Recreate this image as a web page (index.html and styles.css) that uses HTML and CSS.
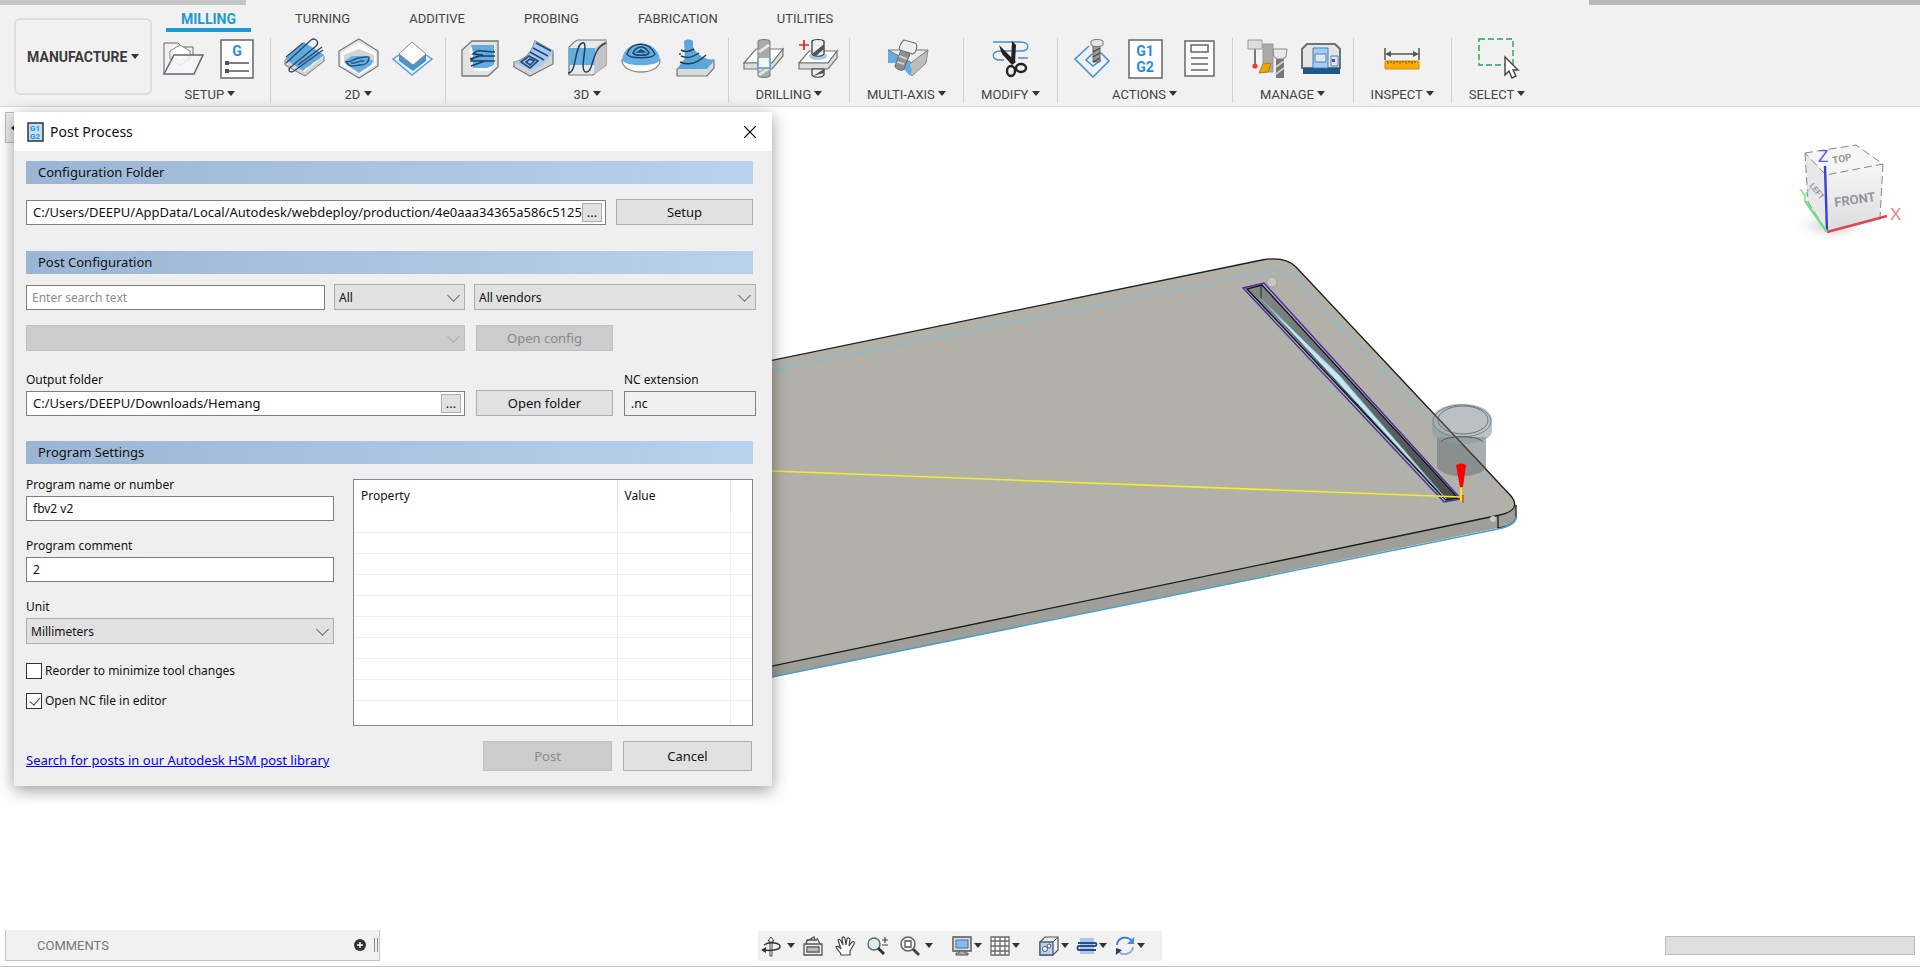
FILE: index.html
```html
<!DOCTYPE html>
<html lang="en">
<head>
    <meta charset="UTF-8">
    <meta name="viewport" content="width=device-width, initial-scale=1.0">
    <title>Post Process</title>
    <link rel="stylesheet" href="styles.css">
</head>
<body>
    <header class="toolbar">
        <div class="strip strip-left"></div>
        <div class="strip strip-right"></div>
        <button type="button" class="workspace-switch">MANUFACTURE <span class="caret"></span></button>

        <div class="ribbon">
            <nav class="tabs">
                <a href="#milling" class="tab active">MILLING</a>
                <a href="#turning" class="tab">TURNING</a>
                <a href="#additive" class="tab">ADDITIVE</a>
                <a href="#probing" class="tab">PROBING</a>
                <a href="#fabrication" class="tab">FABRICATION</a>
                <a href="#utilities" class="tab">UTILITIES</a>
            </nav>

            <div class="groups">
                <section class="group">
                    <div class="icons">
                        <svg class="icon" viewBox="0 0 40 40">
                            <path d="M1 36V5h14l4 4h11v9" fill="none" stroke="#666"/>
                            <path d="M7 13l10-6 10 6v8l-10 6-10-6z" fill="#fff" stroke="#888"/>
                            <path d="M8 17l9 5 9-5v4l-9 6-9-6z" fill="#cfe4f5"/>
                            <path d="M1 36l10-19h29l-9 19z" fill="#f5f7f9" fill-opacity=".8" stroke="#666" stroke-width="1.5"/>
                        </svg>
                        <svg class="icon" viewBox="0 0 40 40">
                            <rect x="4" y="2" width="32" height="38" fill="#fff" stroke="#666" stroke-width="1.5"/>
                            <text x="20" y="18" class="glyph" font-size="14" text-anchor="middle">G</text>
                            <path d="M8 23h4v4H8zM8 31h4v4H8z" fill="#555"/>
                            <path d="M12 25h20M12 33h20" stroke="#555" stroke-width="1.3"/>
                        </svg>
                    </div>
                    <button type="button" class="menu">SETUP <span class="caret"></span></button>
                </section>

                <section class="group">
                    <div class="icons">
                        <svg class="icon" viewBox="0 0 40 40">
                            <path d="M1 22L23 6l17 12v5L21 38 1 27z" fill="#d5d5d5" stroke="#777"/>
                            <path d="M1 21L22 4l18 14-20 16z" fill="#fff"/>
                            <path d="M1 21L20 4l20 13-6 5-4 2-4 4-4 2-3 3z" fill="#5da9e0"/>
                            <path d="M2 25L27 2c4-3 9 2 5 6L8 28c-5 3-3 8 2 5L39 12M2 19l17-14M14 27l24-18" fill="none" stroke="#2b4a68" stroke-width="1.4"/>
                        </svg>
                        <svg class="icon" viewBox="0 0 40 40">
                            <path d="M21 1l19 12v15L21 40 1 28V13z" fill="#e4e4e4" stroke="#777" stroke-width="1.2"/>
                            <path d="M3 15l18-11 17 11v12L21 37 3 27z" fill="#fafafa"/>
                            <path d="M6 17l15-6 15 6v8L21 34 6 25z" fill="#d2d5d8"/>
                            <path d="M7 23l7-5h14l7 5-2 4-12 8-12-8z" fill="#65aee4"/>
                            <path d="M8 24c8 0 8-4 13-4s7-2 10-1c0 5-3 8-9 8s-9 4-14-3zM13 25c5 1 8-3 13-2" fill="none" stroke="#1f4c74" stroke-width="1.3"/>
                        </svg>
                        <svg class="icon" viewBox="0 0 40 40">
                            <path d="M7 17L1 21l19 16 20-16-6-4" fill="none" stroke="#4f9fdc" stroke-width="1.4"/>
                            <path d="M7 16l14 11 13-11v7L21 33 7 23z" fill="#4b93cb"/>
                            <path d="M20 4l14 12-13 11L7 16z" fill="#fff" stroke="#888"/>
                        </svg>
                    </div>
                    <button type="button" class="menu">2D <span class="caret"></span></button>
                </section>

                <section class="group">
                    <div class="icons">
                        <svg class="icon" viewBox="0 0 40 40">
                            <path d="M3 38V12L13 3h26v26L29 38z" fill="#e3e3e3" stroke="#777" stroke-width="1.3"/>
                            <path d="M10 12l4-5h22v20l-6 6H16z" fill="#f8f8f8"/>
                            <path d="M12 7h23v20l-7 3H14V14z" fill="#5fade4"/>
                            <path d="M36 14c-9 0-13-2-18-1l-4 3 10 1c-7 1-11 4-12 6h24M11 21l13-4M36 18H20M12 28l14-5" fill="none" stroke="#1d3f60" stroke-width="1.5"/>
                        </svg>
                        <svg class="icon" viewBox="0 0 40 40">
                            <path d="M1 24c12-2 18-10 21-21l18 10v13L17 38 1 29z" fill="#d4d4d4" stroke="#777" stroke-width="1.2"/>
                            <path d="M1 24c12-2 18-10 21-21l18 10c-4 9-11 16-23 20z" fill="#a9c9ec"/>
                            <path d="M23 5l15 8M20 10l15 8M17 14l14 8M8 24l8-6 9 5-8 7zM13 24l4-3 4 2-4 4z" fill="none" stroke="#234a7c" stroke-width="1.7"/>
                        </svg>
                        <svg class="icon" viewBox="0 0 40 40">
                            <path d="M2 37h24l13-10V2H11C8 2 5 7 2 9z" fill="#e9e9e9" stroke="#777" stroke-width="1.2"/>
                            <path d="M2 10h26v17H2z" fill="#62ade2"/>
                            <path d="M28 10l11-8v25L27 37z" fill="#c4c4c4"/>
                            <path d="M1 35c9 0 6-26 14-30 8-3-4 28 4 29s5-24 20-29" fill="none" stroke="#27435c" stroke-width="1.5"/>
                        </svg>
                        <svg class="icon" viewBox="0 0 40 40">
                            <path d="M1 22c0 16 38 16 38 0z" fill="#fff" stroke="#91887c" stroke-width="1.3"/>
                            <path d="M1 22c2-22 36-22 38 0-3 7-35 7-38 0z" fill="#62ade3"/>
                            <path d="M6 16c4-13 22-13 28 0-2 5-26 5-28 0zM12 15c4-8 12-8 16 0-2 3-14 3-16 0zM17 14l3-2 3 2z" fill="none" stroke="#1e4568" stroke-width="1.5"/>
                        </svg>
                        <svg class="icon" viewBox="0 0 40 40">
                            <path d="M2 31L16 22h23v8l-7 8H2z" fill="#dadada" stroke="#777" stroke-width="1.2"/>
                            <path d="M9 3c2-2 7-2 9 0v6c4 8 12 12 21 14l-7 8H2l8-11z" fill="#5ba7dd"/>
                            <path d="M6 12c5 3 9 1 13-1M6 18c7 3 12 1 18-3M5 24c9 4 18 1 26-7M4 16h2" fill="none" stroke="#2b3d4c" stroke-width="1.5"/>
                        </svg>
                    </div>
                    <button type="button" class="menu">3D <span class="caret"></span></button>
                </section>

                <section class="group">
                    <div class="icons">
                        <svg class="icon" viewBox="0 0 40 40">
                            <path d="M2 25l12-14h27l-11 14z" fill="#fff" stroke="#777" stroke-width="1.2"/>
                            <path d="M2 25h28l11-14v7L30 31H2z" fill="#ddd" stroke="#777" stroke-width="1.2"/>
                            <path d="M16 3c2-2 10-2 12 0v35c-2 2-10 2-12 0z" fill="#aaa" stroke="#777"/>
                            <path d="M17 14l10-7M17 37l10-7M17 32l6-4" stroke="#e2e2e2" stroke-width="3"/>
                            <path d="M16 20h12v10H16z" fill="#f4f4f4"/>
                            <path d="M16 20v10h12V20" fill="none" stroke="#4a9edc" stroke-width="1.4"/>
                        </svg>
                        <svg class="icon" viewBox="0 0 40 40">
                            <path d="M3 25l10-12h28l-9 12z" fill="#fff" stroke="#777" stroke-width="1.2"/>
                            <path d="M3 25h29l9-12v7l-9 11H3z" fill="#ddd" stroke="#777" stroke-width="1.2"/>
                            <ellipse cx="22" cy="18" rx="9" ry="4" fill="#a7c9ea"/>
                            <path d="M16 3c2-2 10-2 12 0v13c-2 3-10 3-12 0zM16 31h12v6c-2 3-10 3-12 0z" fill="#eee" stroke="#333" stroke-width="1.2"/>
                            <path d="M16 16L28 6v5l-8 7zM17 38l11-7v4z" fill="#555"/>
                            <path d="M3 7h10M8 2v10" stroke="#e0242c" stroke-width="1.7"/>
                        </svg>
                    </div>
                    <button type="button" class="menu">DRILLING <span class="caret"></span></button>
                </section>

                <section class="group">
                    <div class="icons">
                        <svg class="icon" viewBox="0 0 40 40">
                            <path d="M1 12h16l8 12v14l-9-9V25H1z" fill="#62ade4"/>
                            <path d="M1 12h40L25 25z" fill="#ececec" stroke="#777"/>
                            <path d="M25 24l16-12-2 13-14 13-6-8z" fill="#bdbdbd" stroke="#888"/>
                            <path d="M19 18l6 14-2 6-7-8z" fill="#62ade4"/>
                            <path d="M14 12l9 4-6 15c-1 3-9 0-9-3z" fill="#8f8f8f" stroke="#666"/>
                            <path d="M12 18l8 3M10 24l7 2" stroke="#ccc" stroke-width="2"/>
                            <path d="M17 2l11 3c3 1 2 9-2 11L13 12c-2-1 1-8 4-10z" fill="#eee" stroke="#777" stroke-width="1.2"/>
                        </svg>
                    </div>
                    <button type="button" class="menu">MULTI-AXIS <span class="caret"></span></button>
                </section>

                <section class="group">
                    <div class="icons">
                        <svg class="icon" viewBox="0 0 40 40">
                            <path d="M3 4h28c9 0 9 9 0 9H10c-9 0-9 9 0 9h4M28 20h10" fill="none" stroke="#478cc8" stroke-width="1.4"/>
                            <path d="M22 3l4 4-1 18-4-1zM9 7l17 17-4 3L12 16z" fill="#222"/>
                            <ellipse cx="21" cy="33" rx="4" ry="5" fill="none" stroke="#222" stroke-width="2.4"/>
                            <ellipse cx="31" cy="30" rx="5" ry="4" fill="none" stroke="#222" stroke-width="2.4"/>
                        </svg>
                    </div>
                    <button type="button" class="menu">MODIFY <span class="caret"></span></button>
                </section>

                <section class="group">
                    <div class="icons">
                        <svg class="icon" viewBox="0 0 40 40">
                            <path d="M18 8L4 21l18 18 16-16-9-9M21 16l-6 6 7 6 8-6" fill="none" stroke="#2f93e0" stroke-width="1.5"/>
                            <path d="M22 8h7v16h-7z" fill="#999" stroke="#666"/>
                            <path d="M22 14l7-4M22 19l7-4M22 24l7-4" stroke="#444" stroke-width="1.3"/>
                            <path d="M20 3c2-2 10-2 12 0v4c-2 2-10 2-12 0z" fill="#e4e4e4" stroke="#777"/>
                        </svg>
                        <svg class="icon" viewBox="0 0 40 40">
                            <rect x="4" y="2" width="33" height="38" fill="#fff" stroke="#666" stroke-width="1.5"/>
                            <text x="20" y="18" class="glyph" font-size="14" text-anchor="middle">G1</text>
                            <text x="20" y="34" class="glyph" font-size="14" text-anchor="middle">G2</text>
                        </svg>
                        <svg class="icon" viewBox="0 0 40 40">
                            <path d="M6 3h29v35H6zM12 7h17v7H12zM12 20h17M12 26h17M12 32h17" fill="#fafafa" stroke="#666" stroke-width="1.5"/>
                        </svg>
                    </div>
                    <button type="button" class="menu">ACTIONS <span class="caret"></span></button>
                </section>

                <section class="group">
                    <div class="icons">
                        <svg class="icon" viewBox="0 0 40 40">
                            <path d="M9 11v16" stroke="#777" stroke-width="2"/>
                            <path d="M2 2h14v9H2z" fill="#ddd" stroke="#999"/>
                            <path d="M17 6h10v28H17z" fill="#aaa" stroke="#999"/>
                            <path d="M17 26l8-1-3 9-9 1z" fill="#f5a300" stroke="#b97c11"/>
                            <circle cx="9" cy="28" r="2.6" fill="#f03535"/>
                            <path d="M30 21h8v19h-8z" fill="#777"/>
                            <path d="M30 29l8-6M30 36l8-6" stroke="#ccc" stroke-width="2"/>
                            <path d="M27 11h14l-1 8-4 2h-5l-3-2z" fill="#e8e8e8" stroke="#888"/>
                        </svg>
                        <svg class="icon" viewBox="0 0 40 40">
                            <path d="M2 30V11l5-5h28l5 5v19z" fill="#e4e4e4" stroke="#6b7176" stroke-width="2"/>
                            <path d="M3 30h37v6H3z" fill="#1c5788"/>
                            <path d="M13 10h15v20H13z" fill="#a5cdf1" stroke="#4580b6"/>
                            <path d="M15 16h11v8H15z" fill="#dfe5ea" stroke="#5884ab"/>
                            <path d="M31 18h7v10h-7z" fill="#d9e9fa" stroke="#4580b6"/>
                            <path d="M32 21h3v3h-3z" fill="#8d2d89"/>
                        </svg>
                    </div>
                    <button type="button" class="menu">MANAGE <span class="caret"></span></button>
                </section>

                <section class="group">
                    <div class="icons">
                        <svg class="icon" viewBox="0 0 40 40">
                            <path d="M3 10v12M37 10v12M5 16h30" stroke="#555" stroke-width="1.5"/>
                            <path d="M3 16l6-3v6zM37 16l-6-3v6z" fill="#555"/>
                            <path d="M3 23h34v8H3z" fill="#fbab08" stroke="#d58b00"/>
                            <path d="M6 23v3M9 23v2M12 23v3M15 23v2M18 23v3M21 23v2M24 23v3M27 23v2M30 23v3M33 23v2" stroke="#7c4e00"/>
                        </svg>
                    </div>
                    <button type="button" class="menu">INSPECT <span class="caret"></span></button>
                </section>

                <section class="group">
                    <div class="icons">
                        <svg class="icon" viewBox="0 0 40 40">
                            <rect x="2" y="1" width="34" height="26" fill="none" stroke="#27a05a" stroke-width="1.4" stroke-dasharray="6 3"/>
                            <path d="M28 19v18l4-4 3 7 4-2-3-6h5z" fill="#fff" stroke="#444" stroke-width="1.4"/>
                        </svg>
                    </div>
                    <button type="button" class="menu">SELECT <span class="caret"></span></button>
                </section>
            </div>
        </div>
    </header>

    <main class="workspace">
        <svg class="viewport" viewBox="0 107 1920 860" preserveAspectRatio="xMinYMin meet">
            <defs>
                <linearGradient id="slotFill" x1="0" y1="0" x2="1" y2="0">
                    <stop offset="0" stop-color="#85898a"/>
                    <stop offset="1" stop-color="#484c4d"/>
                </linearGradient>
                <linearGradient id="cubeFace" x1="0" y1="0" x2="0" y2="1">
                    <stop offset="0" stop-color="#f6f6f6"/>
                    <stop offset="1" stop-color="#dcdcde"/>
                </linearGradient>
                <radialGradient id="cubeShadow">
                    <stop offset="0" stop-color="#999"/>
                    <stop offset="1" stop-color="#fff" stop-opacity="0"/>
                </radialGradient>
            </defs>

            <!-- plate -->
            <path d="M700 690V680L1496 516Q1515 511 1516 503V518Q1514 526 1498 528L772 677z" fill="#9f9f9a"/>
            <path d="M700 375L1262 260Q1285 256 1296 267L1511 496Q1522 510 1500 515L700 681z" fill="#b2b1a9" stroke="#1d1d1b" stroke-width="1.3"/>
            <path d="M1516 505V518Q1514 526 1498 528V515" fill="none" stroke="#1d1d1b" stroke-width="1.3"/>
            <path d="M772 677L1498 529Q1516 525 1516 517" fill="none" stroke="#4b9fca" stroke-width="1.6"/>
            <path d="M700 385L1262 273Q1282 268 1293 277L1488 482" fill="none" stroke="#83bcd2" stroke-width="1.2"/>
            <path d="M1246 299L1443 509Q1449 516 1460 508" fill="none" stroke="#98bfcb"/>

            <!-- slot -->
            <path d="M1243 288L1264 283 1461 499 1444 502z" fill="#b2b1a9" stroke="#4a31a8" stroke-width="1.5"/>
            <path d="M1247 289L1262 285 1458 498 1446 500z" fill="url(#slotFill)" stroke="#161616" stroke-width="1.3"/>
            <path d="M1261 286v13l182 199" fill="none" stroke="#222"/>
            <path d="M1259 297L1446 499 1340 376z" fill="#c5e9f7" stroke="#7fb4cb"/>
            <circle cx="1272" cy="282" r="5" fill="#c7c6c1" stroke="#a0a09a"/>

            <!-- toolpath -->
            <path d="M772 471L1461 497" stroke="#f2ee25" stroke-width="1.6"/>

            <!-- tool holder -->
            <path d="M1437 437h49v30c-4 12-45 12-49 0z" fill="#6f777b" fill-opacity=".6"/>
            <path d="M1432 421c0-23 60-23 60 0v11c-3 16-57 16-60 0z" fill="#8f9ba2" fill-opacity=".6"/>
            <ellipse cx="1462" cy="421" rx="29" ry="16" fill="#b3bdc3" fill-opacity=".4" stroke="#7b858a"/>
            <ellipse cx="1463" cy="420" rx="25" ry="14" fill="none" stroke="#6f787d"/>
            <path d="M1441 442c4-7 38-7 42 0" fill="none" stroke="#555d61"/>
            <path d="M1433 413L1486 469" stroke="#444" stroke-width="1.2"/>
            <path d="M1456 465q5-3 10 0l-3 22h-3z" fill="#fb0000"/>
            <path d="M1461 488v13" stroke="#ffe500" stroke-width="2"/>
            <path d="M1463 495v8" stroke="#e8401c" stroke-width="1.5"/>
            <circle cx="1493" cy="519" r="3" fill="#c9c9c5"/>

            <!-- view cube -->
            <ellipse cx="1832" cy="226" rx="42" ry="16" fill="url(#cubeShadow)" opacity=".6"/>
            <path d="M1805 153l51-8 27 19-57 11z" fill="#f5f5f5"/>
            <path d="M1805 153l21 22 1 57-19-30z" fill="#e8e8ea"/>
            <path d="M1826 175l57-11-3 55-53 13z" fill="url(#cubeFace)"/>
            <path d="M1805 153l51-8 27 19-57 11zM1805 153l3 49 19 30M1883 164l-3 55-53 13" fill="none" stroke="#888" stroke-dasharray="8 4"/>
            <path d="M1825 166l2 66" stroke="#3d3dd0" stroke-width="2.4"/>
            <path d="M1827 232l60-16" stroke="#e24450" stroke-width="2.4"/>
            <path d="M1827 232l-22-31" stroke="#73e07f" stroke-width="2.4"/>
            <text x="1818" y="162" class="axis axis-z">Z</text>
            <text x="1799" y="201" class="axis axis-y">Y</text>
            <text x="1890" y="220" class="axis axis-x">X</text>
            <text x="0" y="0" class="cube-label" font-size="13" transform="translate(1835 207) rotate(-8)">FRONT</text>
            <text x="0" y="0" class="cube-label" font-size="10" transform="translate(1833 164) rotate(-11)">TOP</text>
            <text x="0" y="0" class="cube-label" font-size="8" transform="translate(1809 186) rotate(50)">LEFT</text>
        </svg>

        <aside class="browser-panel"><span class="browser-arrow"></span></aside>

        <form class="dialog">
            <div class="dialog-title">
                <svg class="dialog-icon" viewBox="0 0 17 20">
                    <path d="M1 1h15v18H1z" fill="#c3dff7" stroke="#333" stroke-width="1.5"/>
                    <text x="8" y="9" class="glyph" font-size="8" text-anchor="middle">G1</text>
                    <text x="8" y="17" class="glyph" font-size="8" text-anchor="middle">G2</text>
                </svg>
                <h1>Post Process</h1>
                <button type="button" class="close" aria-label="Close">
                    <svg viewBox="0 0 12 12"><path d="M0 0l12 12M12 0L0 12" stroke="#000" stroke-width="1.2"/></svg>
                </button>
            </div>

            <div class="dialog-body">
                <h2 class="section">Configuration Folder</h2>
                <div class="row path-row">
                    <div class="path">
                        <input type="text" aria-label="Configuration folder" value="C:/Users/DEEPU/AppData/Local/Autodesk/webdeploy/production/4e0aaa34365a586c5125">
                        <button type="button" class="browse">...</button>
                    </div>
                    <button type="button" class="btn">Setup</button>
                </div>

                <h2 class="section">Post Configuration</h2>
                <div class="row filter-row">
                    <input type="text" class="field search" aria-label="Search" placeholder="Enter search text">
                    <div class="select"><select aria-label="Capability"><option>All</option></select></div>
                    <div class="select"><select aria-label="Vendor"><option>All vendors</option></select></div>
                </div>
                <div class="row config-row">
                    <div class="select disabled"><select aria-label="Post" disabled></select></div>
                    <button type="button" class="btn" disabled>Open config</button>
                </div>
                <div class="row output-row">
                    <label for="output">Output folder</label>
                    <label for="ext" class="ext-label">NC extension</label>
                    <div class="path">
                        <input type="text" id="output" value="C:/Users/DEEPU/Downloads/Hemang">
                        <button type="button" class="browse">...</button>
                    </div>
                    <button type="button" class="btn">Open folder</button>
                    <input type="text" id="ext" class="field ext" value=".nc">
                </div>

                <h2 class="section">Program Settings</h2>
                <div class="settings">
                    <div class="settings-left">
                        <label for="name">Program name or number</label>
                        <input type="text" id="name" class="field" value="fbv2 v2">
                        <label for="comment">Program comment</label>
                        <input type="text" id="comment" class="field" value="2">
                        <label for="unit">Unit</label>
                        <div class="select"><select id="unit"><option>Millimeters</option></select></div>
                        <label class="check"><input type="checkbox"> Reorder to minimize tool changes</label>
                        <label class="check"><input type="checkbox" checked> Open NC file in editor</label>
                    </div>
                    <div class="table-box">
                        <table>
                            <thead>
                                <tr><th class="col-property">Property</th><th class="col-value">Value</th><th></th></tr>
                            </thead>
                            <tbody>
                                <tr><td></td><td></td><td></td></tr>
                                <tr><td></td><td></td><td></td></tr>
                                <tr><td></td><td></td><td></td></tr>
                                <tr><td></td><td></td><td></td></tr>
                                <tr><td></td><td></td><td></td></tr>
                                <tr><td></td><td></td><td></td></tr>
                                <tr><td></td><td></td><td></td></tr>
                                <tr><td></td><td></td><td></td></tr>
                                <tr><td></td><td></td><td></td></tr>
                                <tr><td></td><td></td><td></td></tr>
                            </tbody>
                        </table>
                    </div>
                </div>

                <div class="dialog-footer">
                    <a href="#library">Search for posts in our Autodesk HSM post library</a>
                    <button type="submit" class="btn" disabled>Post</button>
                    <button type="button" class="btn">Cancel</button>
                </div>
            </div>
        </form>

        <footer class="bottom-bar">
            <div class="comments">
                <span>COMMENTS</span>
                <button type="button" class="add" aria-label="Add comment">
                    <svg viewBox="0 0 12 12"><circle cx="6" cy="6" r="6" fill="#333"/><path d="M3 6h6M6 3v6" stroke="#fff" stroke-width="1.4"/></svg>
                </button>
                <span class="grip"></span>
            </div>

            <div class="navbar">
                <button type="button" class="nav nav-menu nav-wide" aria-label="Orbit">
                    <svg viewBox="0 0 20 20"><path d="M9 20V5H7l3-4 3 4h-2v15z" fill="#fff" stroke="#444"/><path d="M3 9c6-4 17-2 16 2-1 3-9 4-16 3" fill="none" stroke="#333" stroke-width="1.5"/><path d="M0 14l5-3v6z" fill="#333"/></svg>
                    <span class="caret"></span>
                </button>
                <button type="button" class="nav nav-tight" aria-label="Look at">
                    <svg viewBox="0 0 20 20"><path d="M1 8h18v11H1zM4 11h12v5H4zM3 8l1-4h10M4 5l7-4 1 3M14 2l3 6" fill="#eee" stroke="#555" stroke-width="1.3"/><path d="M5 12h10v3H5z" fill="#bbb"/></svg>
                </button>
                <button type="button" class="nav" aria-label="Pan">
                    <svg viewBox="0 0 20 20"><path d="M6 19c0-3-5-6-5-8 2-2 4 1 5 2L3 4c1-2 3 0 5 5L7 2c1-2 3-1 3 1l1 6 1-6c1-2 3-1 3 1l-1 6 3-4c2-1 3 0 2 2l-4 7v4z" fill="#fff" stroke="#444" stroke-width="1.2"/></svg>
                </button>
                <button type="button" class="nav" aria-label="Zoom">
                    <svg viewBox="0 0 20 20"><circle cx="7" cy="8" r="6" fill="#dcecf0" stroke="#666" stroke-width="1.4"/><path d="M11 12l6 6" stroke="#333" stroke-width="3"/><path d="M15 4h6M18 1v6M15 9h6" stroke="#444" stroke-width="1.2"/></svg>
                </button>
                <button type="button" class="nav nav-menu nav-wide" aria-label="Fit">
                    <svg viewBox="0 0 20 20"><circle cx="9" cy="8" r="7" fill="#eef3f5" stroke="#666" stroke-width="1.6"/><path d="M6 5h6v6H6z" fill="#fff" stroke="#555" stroke-width="1.3"/><path d="M14 13l6 6" stroke="#444" stroke-width="3"/></svg>
                    <span class="caret"></span>
                </button>
                <button type="button" class="nav nav-menu nav-first" aria-label="Display">
                    <svg viewBox="0 0 20 20"><path d="M1 1h18v14H1z" fill="#ddd" stroke="#555" stroke-width="1.4"/><path d="M4 4h12v8H4z" fill="#8cb8ea" stroke="#3f6ca3"/><path d="M7 15h6v2h3v2H4v-2h3z" fill="#aaa" stroke="#555"/></svg>
                    <span class="caret"></span>
                </button>
                <button type="button" class="nav nav-menu" aria-label="Grid">
                    <svg viewBox="0 0 20 20"><path d="M1 1h18v18H1zM5 1v18M10 1v18M15 1v18M1 5h18M1 10h18M1 15h18" fill="#fff" stroke="#6a6a6a" stroke-width="1.3"/></svg>
                    <span class="caret"></span>
                </button>
                <button type="button" class="nav nav-menu nav-first" aria-label="Visibility">
                    <svg viewBox="0 0 20 20"><path d="M1 6l5-5h13v13l-5 5H1z" fill="#eee" stroke="#555" stroke-width="1.2"/><path d="M1 6h13v13H1z" fill="#bcd1ea" stroke="#445d7c" stroke-width="1.3"/><path d="M14 6l5-5" stroke="#555"/><circle cx="6" cy="13" r="2.5" fill="#fff" stroke="#456"/><circle cx="10" cy="10" r="2" fill="#fff" stroke="#456"/></svg>
                    <span class="caret"></span>
                </button>
                <button type="button" class="nav nav-menu" aria-label="Simulation">
                    <svg viewBox="0 0 20 20"><path d="M3 2h14v16H3z" fill="#a8c8f0"/><path d="M1 7h17c2 0 2 3 0 3H2c-2 0-2 4 0 4h17" fill="none" stroke="#2e4f7c" stroke-width="1.9"/></svg>
                    <span class="caret"></span>
                </button>
                <button type="button" class="nav nav-menu" aria-label="Refresh">
                    <svg viewBox="0 0 20 20"><path d="M2 9C3 0 13 0 17 5" fill="none" stroke="#3d7dd0" stroke-width="1.8"/><path d="M18 11c-1 8-11 9-15 4" fill="none" stroke="#8ba5c6" stroke-width="1.8"/><path d="M19 1v7h-7z" fill="#3d8df0"/><path d="M1 19v-7l6 2z" fill="#2a3f5c"/></svg>
                    <span class="caret"></span>
                </button>
            </div>

            <div class="status"></div>
        </footer>
    </main>
</body>
</html>
```

FILE: styles.css
```css
* {
    box-sizing: border-box;
}

body {
    margin: 0;
    min-height: 100vh;
    display: flex;
    flex-direction: column;
    background-color: #fff;
    color: #111;
    font-family: "Noto Sans", sans-serif;
    font-size: 12px;
    overflow: hidden;
}

button, input, select {
    font: inherit;
    color: inherit;
    margin: 0;
    padding: 0;
    border: none;
    border-radius: 0;
    background: none;
}

/* Toolbar */
.toolbar {
    position: relative;
    display: flex;
    height: 107px;
    background-color: #f1f1f1;
    border-bottom: 1px solid #d6d6d6;
    color: #444;
    font-family: Roboto, sans-serif;
    font-size: 13px;
}

.strip {
    position: absolute;
    top: 0;
    height: 5px;
    background-color: #c6c6c6;
}

.strip-left {
    left: 0;
    width: 246px;
}

.strip-right {
    right: 0;
    width: 331px;
    background-color: #b9b9b9;
}

.workspace-switch {
    width: 138px;
    height: 77px;
    margin: 18px 0 0 14px;
    border: 2px solid #dedede;
    border-radius: 6px;
    font-size: 14px;
    font-weight: 700;
    color: #3c3c3c;
    white-space: nowrap;
}

.caret {
    display: inline-block;
    border: 4px solid transparent;
    border-top: 5px solid #333;
    border-bottom: none;
    vertical-align: 3px;
}

.tabs {
    display: flex;
    gap: 29px;
    height: 32px;
    padding-left: 14px;
}

.tab {
    padding: 10px 15px 0;
    line-height: 18px;
    color: #444;
    text-decoration: none;
}

.tab.active {
    color: #1a9ad7;
    font-size: 14px;
    font-weight: 700;
    border-bottom: 4px solid #1a9ad7;
}

.groups {
    display: flex;
    margin: 6px 0 0 -2px;
}

.group {
    height: 65px;
    padding: 0 13px;
    border-right: 1px solid #d2d2d2;
    display: flex;
    flex-direction: column;
    align-items: center;
    justify-content: space-between;
}

.group:last-child {
    border-right: none;
}

.icons {
    display: flex;
    gap: 14px;
}

.icon {
    width: 40px;
    height: 40px;
    overflow: visible;
}

.menu {
    padding: 0 4px;
    line-height: 16px;
    white-space: nowrap;
}

.glyph {
    font-family: Roboto, sans-serif;
    font-weight: 700;
    fill: #1e8fe8;
}

/* Workspace */
.workspace {
    position: relative;
    flex: 1;
    display: flex;
    flex-direction: column;
    justify-content: flex-end;
    border-bottom: 1px solid #c4c4c4;
}

.viewport {
    position: absolute;
    top: 0;
    left: 0;
    width: 100%;
}

.axis {
    font-family: "Liberation Sans", sans-serif;
    font-size: 17px;
}

.axis-x {
    fill: #f07b83;
}

.axis-y {
    fill: #80ea8a;
}

.axis-z {
    fill: #5a5ae6;
}

.cube-label {
    font-family: Roboto, sans-serif;
    font-weight: 700;
    fill: #96989c;
}

.browser-panel {
    position: absolute;
    top: 5px;
    left: 5px;
    width: 375px;
    height: 31px;
    border: 1px solid #bbb;
    background-color: #eee;
}

.browser-arrow {
    display: block;
    width: 0;
    margin: 11px 0 0 5px;
    border: 4px solid transparent;
    border-right: 5px solid #222;
    border-left: none;
}

/* Dialog */
.dialog {
    position: absolute;
    top: 5px;
    left: 14px;
    width: 758px;
    background-color: #efefef;
    box-shadow: 0 4px 16px rgba(0, 0, 0, 0.4);
}

.dialog-title {
    display: flex;
    align-items: center;
    height: 39px;
    padding: 0 16px 0 13px;
    background-color: #fff;
}

.dialog-icon {
    width: 17px;
    height: 20px;
}

.dialog-title h1 {
    flex: 1;
    margin: 0 0 0 6px;
    font-size: 14px;
    font-weight: 400;
}

.close svg {
    display: block;
    width: 12px;
    height: 12px;
}

.dialog-body {
    padding: 10px 16px 15px 12px;
}

.section {
    margin: 26px 3px 0 0;
    padding-left: 12px;
    height: 23px;
    line-height: 22px;
    font-size: 13px;
    font-weight: 400;
    background: linear-gradient(to right, #9bb6d4, #b8d1ec);
}

.section:first-child {
    margin-top: 0;
}

.row {
    display: grid;
    align-items: center;
}

.path-row {
    grid-template-columns: 1fr 137px;
    gap: 10px;
    margin: 15px 3px 0 0;
}

.filter-row {
    grid-template-columns: 299px 131px 1fr;
    gap: 9px;
    margin-top: 10px;
}

.config-row {
    grid-template-columns: 439px 137px;
    gap: 11px;
    margin-top: 15px;
}

.output-row {
    grid-template-columns: 439px 137px 132px;
    gap: 2px 11px;
    margin-top: 21px;
}

.output-row + .section {
    margin-top: 25px;
}

.ext-label {
    grid-column: 3;
}

label {
    line-height: 16px;
}

.field, .path {
    width: 100%;
    height: 25px;
    border: 1px solid #7f7f7f;
    background-color: #fff;
}

.field {
    padding: 0 6px;
}

.search {
    padding: 0 5px;
}

.search::placeholder {
    color: #8c8c8c;
}

.ext {
    background-color: #efefef;
}

.path {
    display: flex;
    align-items: center;
    padding: 0 3px 0 6px;
    font-size: 13px;
}

.path input {
    flex: 1;
    min-width: 0;
}

.browse {
    width: 20px;
    height: 19px;
    border: 1px solid #adadad;
    background-color: #e1e1e1;
    line-height: 16px;
}

.btn {
    height: 26px;
    border: 1px solid #adadad;
    background-color: #e1e1e1;
    font-size: 13px;
}

.btn:disabled {
    border-color: #bfbfbf;
    background-color: #ccc;
    color: #8a8a8a;
}

.select {
    position: relative;
    height: 26px;
}

.select::after {
    content: "";
    position: absolute;
    top: 7px;
    right: 7px;
    width: 8px;
    height: 8px;
    border: solid #666;
    border-width: 0 1px 1px 0;
    transform: rotate(45deg);
}

.select select {
    appearance: none;
    width: 100%;
    height: 100%;
    padding: 0 4px;
    border: 1px solid #adadad;
    background-color: #e1e1e1;
}

.select.disabled select {
    border-color: #bfbfbf;
    background-color: #ccc;
    opacity: 1;
}

.select.disabled::after {
    border-color: #aaa;
}

.settings {
    display: grid;
    grid-template-columns: 308px 1fr;
    gap: 19px;
    margin: 13px 3px 0 0;
}

.settings-left {
    display: flex;
    flex-direction: column;
}

.settings-left .field {
    margin: 3px 0 17px;
}

.settings-left .select {
    margin: 3px 0 19px;
}

.check {
    display: flex;
    align-items: center;
    gap: 3px;
    height: 16px;
    margin-bottom: 14px;
}

.check input {
    appearance: none;
    position: relative;
    width: 16px;
    height: 16px;
    border: 1px solid #333;
    background-color: #fff;
}

.check input:checked::after {
    content: "";
    position: absolute;
    top: 1px;
    left: 5px;
    width: 5px;
    height: 9px;
    border: solid #444;
    border-width: 0 1px 1px 0;
    transform: rotate(40deg);
}

.table-box {
    height: 247px;
    margin-top: 2px;
    border: 1px solid #828790;
    background-color: #fff;
}

table {
    width: 100%;
    border-collapse: collapse;
    table-layout: fixed;
}

th {
    height: 31px;
    padding: 0 7px;
    font-weight: 400;
    text-align: left;
    border-right: 1px solid #e5e5e5;
}

td {
    height: 21px;
    padding: 0;
    border-right: 1px solid #efefef;
    border-bottom: 1px solid #f0f0f0;
}

th:last-child, td:last-child {
    border-right: none;
}

tr:last-child td {
    height: 24px;
    border-bottom: none;
}

.col-property {
    width: 263px;
}

.col-value {
    width: 113px;
}

.dialog-footer {
    display: grid;
    grid-template-columns: 1fr 129px 129px;
    gap: 11px;
    align-items: center;
    margin: 15px 4px 0 0;
}

.dialog-footer .btn {
    height: 30px;
}

.dialog-footer a {
    padding-top: 8px;
    font-size: 13px;
    color: #00f;
}

/* Bottom bar */
.bottom-bar {
    display: grid;
    grid-template-columns: 1fr auto 1fr;
    align-items: center;
    padding: 0 5px 5px;
}

.comments {
    display: flex;
    align-items: center;
    width: 375px;
    height: 31px;
    padding: 0 1px 0 31px;
    border: 1px solid #c4c4c4;
    border-top: none;
    background-color: #f1f1f1;
    color: #777;
    font-family: Roboto, sans-serif;
    font-size: 13px;
}

.add {
    margin: 0 8px 0 auto;
}

.add svg {
    display: block;
    width: 12px;
    height: 12px;
}

.grip {
    width: 4px;
    height: 14px;
    border: solid #888;
    border-width: 0 1px;
}

.navbar {
    display: flex;
    align-items: center;
    gap: 12px;
    width: 404px;
    height: 30px;
    padding: 0 3px;
    background-color: #f1f1f1;
}

.nav {
    display: flex;
    align-items: center;
    gap: 2px;
}

.nav svg {
    width: 20px;
    height: 20px;
    overflow: visible;
}

.nav-menu + .nav-menu {
    margin-left: -4px;
}

.nav-menu.nav-first {
    margin-left: 7px;
}

.nav-wide {
    gap: 6px;
}

.nav-tight {
    margin-left: -4px;
}

.status {
    justify-self: end;
    width: 250px;
    height: 19px;
    border: 1px solid #bcbcbc;
    background-color: #dedede;
}
```
